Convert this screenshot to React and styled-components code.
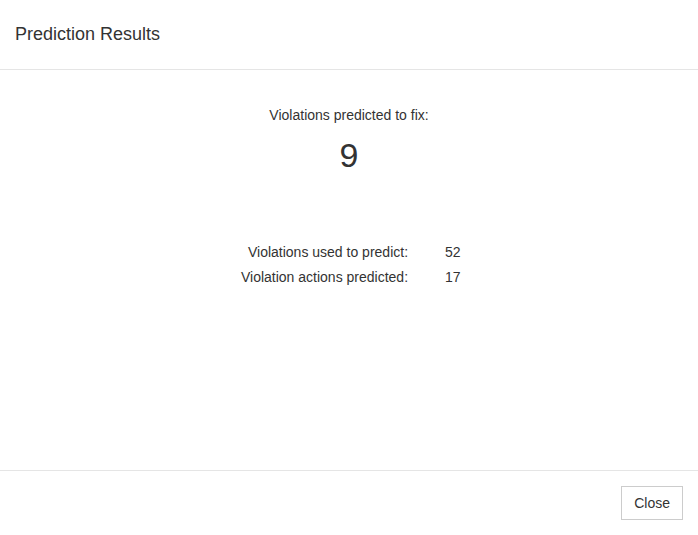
import React from "react";
import styled, { createGlobalStyle } from "styled-components";

const Global = createGlobalStyle`
  html, body { margin: 0; padding: 0; background: #fff; }
  body { font-family: "Liberation Sans", Arial, sans-serif; color: #333; }
`;

const Modal = styled.div`
  width: 698px;
  height: 535px;
  display: flex;
  flex-direction: column;
  background: #fff;
`;

const Header = styled.div`
  height: 67px;
  padding: 0 15px 2px;
  display: flex;
  align-items: center;
  border-bottom: 1px solid #e5e5e5;
`;

const Title = styled.h4`
  margin: 0;
  font-size: 18px;
  font-weight: 400;
  line-height: 26px;
  color: #333;
`;

const Body = styled.div`
  height: 400px;
  box-sizing: border-box;
  padding-top: 35px;
  display: flex;
  flex-direction: column;
  align-items: center;
`;

const Caption = styled.div`
  font-size: 14px;
  line-height: 20px;
`;

const BigNumber = styled.div`
  font-size: 34px;
  line-height: 40px;
  margin-top: 10px;
`;

const Stats = styled.div`
  margin-top: 67px;
  margin-left: 6px;
  display: grid;
  grid-template-columns: auto auto;
  column-gap: 37px;
  row-gap: 5px;
  font-size: 14px;
  line-height: 20px;
`;

const Label = styled.div`
  text-align: right;
`;

const Value = styled.div`
  text-align: left;
  min-width: 18px;
`;

const Footer = styled.div`
  flex: 1;
  border-top: 1px solid #e5e5e5;
  padding: 15px;
  display: flex;
  justify-content: flex-end;
  align-items: flex-start;
`;

const Button = styled.button`
  font-family: "Liberation Sans", Arial, sans-serif;
  font-size: 14px;
  line-height: 20px;
  color: #333;
  background: #fff;
  border: 1px solid #ccc;
  border-radius: 0;
  padding: 6px 12px;
  cursor: pointer;
`;

const stats = [
  { label: "Violations used to predict:", value: 52 },
  { label: "Violation actions predicted:", value: 17 },
];

export default function App() {
  return (
    <>
      <Global />
      <Modal>
        <Header>
          <Title>Prediction Results</Title>
        </Header>
        <Body>
          <Caption>Violations predicted to fix:</Caption>
          <BigNumber>9</BigNumber>
          <Stats>
            {stats.map((s) => (
              <React.Fragment key={s.label}>
                <Label>{s.label}</Label>
                <Value>{s.value}</Value>
              </React.Fragment>
            ))}
          </Stats>
        </Body>
        <Footer>
          <Button>Close</Button>
        </Footer>
      </Modal>
    </>
  );
}
